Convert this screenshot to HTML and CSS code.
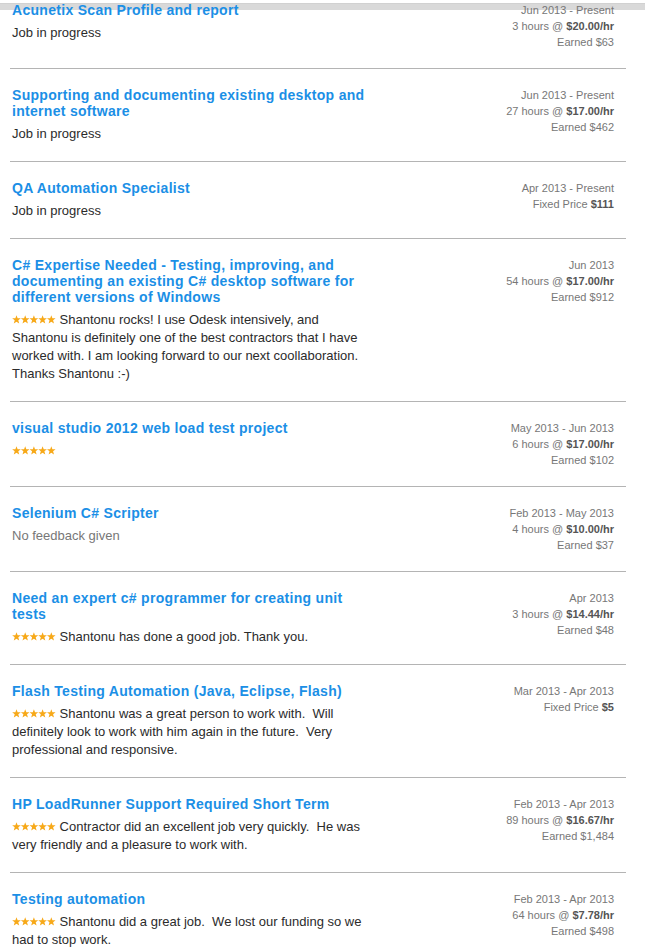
FILE: index.html
```html
<!DOCTYPE html>
<html>
<head>
<meta charset="utf-8">
<link rel="stylesheet" href="styles.css">
</head>
<body>
<svg width="0" height="0" class="defs">
  <defs>
    <symbol id="star" viewBox="0 0 10 10">
      <polygon points="5,0.2 6.25,3.55 9.8,3.65 7,5.9 8,9.5 5,7.4 2,9.5 3,5.9 0.2,3.65 3.75,3.55"/>
    </symbol>
  </defs>
</svg>
<div class="list">
  <div class="job">
    <div class="main">
      <div class="title">Acunetix Scan Profile and report</div>
      <div class="desc">Job in progress</div>
    </div>
    <div class="meta">
      <div>Jun 2013 - Present</div>
      <div>3 hours @ <b>$20.00/hr</b></div>
      <div>Earned $63</div>
    </div>
  </div>

  <div class="job">
    <div class="main">
      <div class="title">Supporting and documenting existing desktop and internet software</div>
      <div class="desc">Job in progress</div>
    </div>
    <div class="meta">
      <div>Jun 2013 - Present</div>
      <div>27 hours @ <b>$17.00/hr</b></div>
      <div>Earned $462</div>
    </div>
  </div>

  <div class="job">
    <div class="main">
      <div class="title">QA Automation Specialist</div>
      <div class="desc">Job in progress</div>
    </div>
    <div class="meta">
      <div>Apr 2013 - Present</div>
      <div>Fixed Price <b>$111</b></div>
    </div>
  </div>

  <div class="job">
    <div class="main">
      <div class="title">C# Expertise Needed - Testing, improving, and documenting an existing C# desktop software for different versions of Windows</div>
      <div class="desc"><svg class="stars" viewBox="0 0 44 9"><use href="#star" x="0" y="0" width="9" height="9"/><use href="#star" x="8.7" y="0" width="9" height="9"/><use href="#star" x="17.4" y="0" width="9" height="9"/><use href="#star" x="26.1" y="0" width="9" height="9"/><use href="#star" x="34.8" y="0" width="9" height="9"/></svg> Shantonu rocks! I use Odesk intensively, and Shantonu is definitely one of the best contractors that I have worked with. I am looking forward to our next coollaboration. Thanks Shantonu :-)</div>
    </div>
    <div class="meta">
      <div>Jun 2013</div>
      <div>54 hours @ <b>$17.00/hr</b></div>
      <div>Earned $912</div>
    </div>
  </div>

  <div class="job">
    <div class="main">
      <div class="title">visual studio 2012 web load test project</div>
      <div class="desc"><svg class="stars" viewBox="0 0 44 9"><use href="#star" x="0" y="0" width="9" height="9"/><use href="#star" x="8.7" y="0" width="9" height="9"/><use href="#star" x="17.4" y="0" width="9" height="9"/><use href="#star" x="26.1" y="0" width="9" height="9"/><use href="#star" x="34.8" y="0" width="9" height="9"/></svg></div>
    </div>
    <div class="meta">
      <div>May 2013 - Jun 2013</div>
      <div>6 hours @ <b>$17.00/hr</b></div>
      <div>Earned $102</div>
    </div>
  </div>

  <div class="job">
    <div class="main">
      <div class="title">Selenium C# Scripter</div>
      <div class="desc muted">No feedback given</div>
    </div>
    <div class="meta">
      <div>Feb 2013 - May 2013</div>
      <div>4 hours @ <b>$10.00/hr</b></div>
      <div>Earned $37</div>
    </div>
  </div>

  <div class="job">
    <div class="main">
      <div class="title">Need an expert c# programmer for creating unit tests</div>
      <div class="desc"><svg class="stars" viewBox="0 0 44 9"><use href="#star" x="0" y="0" width="9" height="9"/><use href="#star" x="8.7" y="0" width="9" height="9"/><use href="#star" x="17.4" y="0" width="9" height="9"/><use href="#star" x="26.1" y="0" width="9" height="9"/><use href="#star" x="34.8" y="0" width="9" height="9"/></svg> Shantonu has done a good job. Thank you.</div>
    </div>
    <div class="meta">
      <div>Apr 2013</div>
      <div>3 hours @ <b>$14.44/hr</b></div>
      <div>Earned $48</div>
    </div>
  </div>

  <div class="job">
    <div class="main">
      <div class="title">Flash Testing Automation (Java, Eclipse, Flash)</div>
      <div class="desc"><svg class="stars" viewBox="0 0 44 9"><use href="#star" x="0" y="0" width="9" height="9"/><use href="#star" x="8.7" y="0" width="9" height="9"/><use href="#star" x="17.4" y="0" width="9" height="9"/><use href="#star" x="26.1" y="0" width="9" height="9"/><use href="#star" x="34.8" y="0" width="9" height="9"/></svg> Shantonu was a great person to work with.&nbsp; Will definitely look to work with him again in the future.&nbsp; Very professional and responsive.</div>
    </div>
    <div class="meta">
      <div>Mar 2013 - Apr 2013</div>
      <div>Fixed Price <b>$5</b></div>
    </div>
  </div>

  <div class="job">
    <div class="main">
      <div class="title">HP LoadRunner Support Required Short Term</div>
      <div class="desc"><svg class="stars" viewBox="0 0 44 9"><use href="#star" x="0" y="0" width="9" height="9"/><use href="#star" x="8.7" y="0" width="9" height="9"/><use href="#star" x="17.4" y="0" width="9" height="9"/><use href="#star" x="26.1" y="0" width="9" height="9"/><use href="#star" x="34.8" y="0" width="9" height="9"/></svg> Contractor did an excellent job very quickly.&nbsp; He was very friendly and a pleasure to work with.</div>
    </div>
    <div class="meta">
      <div>Feb 2013 - Apr 2013</div>
      <div>89 hours @ <b>$16.67/hr</b></div>
      <div>Earned $1,484</div>
    </div>
  </div>

  <div class="job">
    <div class="main">
      <div class="title">Testing automation</div>
      <div class="desc"><svg class="stars" viewBox="0 0 44 9"><use href="#star" x="0" y="0" width="9" height="9"/><use href="#star" x="8.7" y="0" width="9" height="9"/><use href="#star" x="17.4" y="0" width="9" height="9"/><use href="#star" x="26.1" y="0" width="9" height="9"/><use href="#star" x="34.8" y="0" width="9" height="9"/></svg> Shantonu did a great job.&nbsp; We lost our funding so we had to stop work.</div>
    </div>
    <div class="meta">
      <div>Feb 2013 - Apr 2013</div>
      <div>64 hours @ <b>$7.78/hr</b></div>
      <div>Earned $498</div>
    </div>
  </div>
</div>
</body>
</html>
```

FILE: styles.css
```css
html, body {
  margin: 0;
  padding: 0;
}

body {
  background-color: #ffffff;
  background-image: linear-gradient(to bottom, transparent 3px, #c9c9c9 3px, #d9d9d9 4px, #d9d9d9 10px, transparent 10px);
  background-repeat: no-repeat;
  background-size: 100% 10px;
  font-family: "Liberation Sans", Arial, sans-serif;
  color: #2b2b2b;
  overflow: hidden;
}

.defs {
  position: absolute;
  width: 0;
  height: 0;
}

.list {
  width: 616px;
  margin: -16px 0 0 10px;
}

.job {
  display: flex;
  justify-content: space-between;
  align-items: flex-start;
  padding: 18px 12px 18px 2px;
  border-bottom: 1px solid #b4b4b4;
}

.main {
  width: 366px;
}

.title {
  font-size: 14px;
  font-weight: bold;
  letter-spacing: 0.3px;
  line-height: 16px;
  color: #1b8fe6;
}

.desc {
  margin-top: 6px;
  font-size: 13px;
  line-height: 18px;
  color: #2b2b2b;
}

.desc.muted {
  color: #777777;
}

.stars {
  width: 44px;
  height: 9px;
  fill: #f7a919;
  vertical-align: 0;
}

.meta {
  flex: none;
  text-align: right;
  white-space: nowrap;
  font-size: 11px;
  line-height: 16px;
  color: #777777;
}

.meta b {
  color: #555555;
}
```
